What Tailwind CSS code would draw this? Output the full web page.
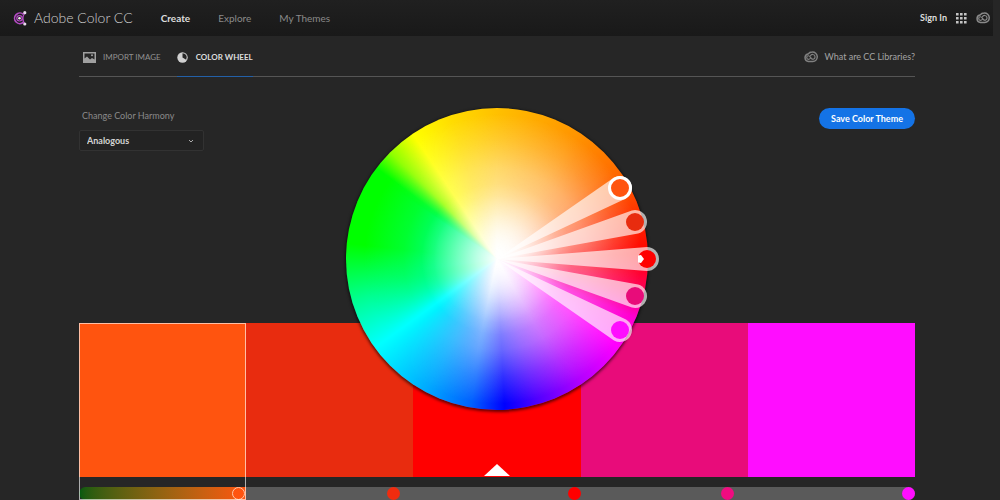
<!DOCTYPE html>
<html lang="en">
<head>
  <meta charset="UTF-8">
  <meta name="viewport" content="width=device-width, initial-scale=1.0">
  <title>Adobe Color CC</title>
  <script src="https://cdn.jsdelivr.net/npm/@tailwindcss/browser@4"></script>
</head>
<body class="h-screen overflow-hidden bg-[#262626] font-['Lato','Open_Sans',sans-serif] text-[10px] text-[#8a8a8a]">
  <svg class="hidden">
    <symbol id="cc" viewBox="0 0 28 24">
      <g fill="none" stroke="currentColor" stroke-linecap="round">
        <path d="M9 21a7.500 7.500 0 0 1-1-14.800C10 3.500 13 2 16.500 2a9.500 9.500 0 0 1 1 19z" stroke-width="3"/>
        <path d="M18 16.500c-5 0-5-7-9-7a3.600 3.600 0 0 0 0 7.200c1.500 0 2.500-.7 3.300-1.700" stroke-width="2.400"/>
        <path d="M13 9.500c1-2 3-3 5-2.500a4.800 4.800 0 0 1 0 9.500" stroke-width="2.400"/>
      </g>
    </symbol>
  </svg>

  <!-- Header -->
  <header class="mr-[7px] flex h-9 items-center bg-linear-to-b from-[#202020] to-[#191919] pl-3">
    <a href="#" class="flex items-center gap-[6px] text-sm font-light text-[#d0d0d0]">
      <svg class="size-4" viewBox="0 0 16 16">
        <path d="M11.500 4.400A5.300 5.300 0 1 0 11.500 12.200" fill="none" stroke="#b44cc4" stroke-width="1.700"/>
        <path d="M12.500 3.500c-2 3-2 7 0 10" fill="none" stroke="#b44cc4" stroke-width="1.300"/>
        <circle cx="7.500" cy="8.300" r="2.700" fill="none" stroke="#b44cc4" stroke-width="1.200"/>
        <circle cx="7.500" cy="8.300" r="1.300" fill="#eee"/>
        <circle cx="12.800" cy="2.700" r="1.600" fill="#e8d8ec"/>
        <circle cx="12.800" cy="14" r="1.600" fill="#e8d8ec"/>
      </svg>
      Adobe Color CC
    </a>
    <nav class="ml-[28px] flex gap-[28px]">
      <a href="#" class="font-bold text-[#dcdcdc]">Create</a>
      <a href="#">Explore</a>
      <a href="#">My Themes</a>
    </nav>
    <div class="ml-auto flex items-center gap-2 pr-[2px]">
      <a href="#" class="text-[9px] font-bold text-[#dcdcdc]">Sign In</a>
      <button aria-label="Apps">
        <svg class="size-3" viewBox="0 0 12 12" fill="#c4c4c4">
          <path d="M1 1h2.600v2.600H1zM5 1h2.600v2.600H5zM9 1h2.600v2.600H9zM1 5h2.600v2.600H1zM5 5h2.600v2.600H5zM9 5h2.600v2.600H9zM1 9h2.600v2.600H1zM5 9h2.600v2.600H5zM9 9h2.600v2.600H9z"/>
        </svg>
      </button>
      <a href="#" aria-label="Creative Cloud"><svg class="h-3 w-4"><use href="#cc"/></svg></a>
    </div>
  </header>

  <main class="relative mr-[85px] ml-[79px]">
    <!-- Tabs -->
    <div class="flex h-[41px] items-stretch border-b border-[#555]">
      <a href="#" class="flex items-center gap-[7px] pt-[2px] pl-1 text-[8px] text-[#909090]">
        <svg class="h-[11px] w-[13px]" viewBox="0 0 13 11">
          <path d="M0 0h13v11H0zM1.500 1.500v5l2.500-2 3 3 2-1.500 2.500 1.500v-6z" fill="#a0a0a0" fill-rule="evenodd"/>
          <circle cx="9" cy="3.300" r="1" fill="#a0a0a0"/>
        </svg>
        IMPORT IMAGE
      </a>
      <a href="#" class="-mb-px ml-4 flex items-center gap-2 border-b border-[#2360a8] pt-[2px] text-[8px] font-bold text-[#dcdcdc]">
        <svg class="size-[11px]" viewBox="0 0 11 11">
          <circle cx="5.500" cy="5.500" r="5.200" fill="#d0d0d0"/>
          <path d="M5.500 5.500V1.200a4.300 4.300 0 0 1 3.700 6.500z" fill="#262626"/>
        </svg>
        COLOR WHEEL
      </a>
      <a href="#" class="ml-auto flex items-center gap-[6px] pt-[2px] text-[9px] text-[#a4a4a4]">
        <svg class="h-3 w-[14px] text-[#808080]"><use href="#cc"/></svg>
        What are CC Libraries?
      </a>
    </div>

    <!-- Controls -->
    <div class="flex h-[246px] items-start justify-between pt-[31px]">
      <div>
        <label for="harmony" class="ml-[3px] block text-[9px] leading-4">Change Color Harmony</label>
        <div class="relative mt-[6px]">
          <select id="harmony" class="h-[21px] w-[125px] appearance-none rounded-xs border border-[#323232] bg-[#232323] pl-[7px] text-[9px] font-bold text-[#d4d4d4]">
            <option>Analogous</option>
            <option>Monochromatic</option>
            <option>Triad</option>
            <option>Complementary</option>
            <option>Compound</option>
            <option>Shades</option>
            <option>Custom</option>
          </select>
          <svg class="pointer-events-none absolute top-2 right-[10px] size-[6px]" viewBox="0 0 6 6"><path d="M1 2l2 2 2-2" fill="none" stroke="#aaa"/></svg>
        </div>
      </div>
      <button class="h-[21px] w-24 rounded-full bg-[#1473e6] text-[9px] font-bold text-white">Save Color Theme</button>
    </div>

    <!-- Color wheel: hue, spring green tint, then two white falloffs -->
    <div class="absolute top-[72px] left-1/2 size-[302px] -translate-x-1/2">
      <div class="absolute inset-0 rounded-full bg-[conic-gradient(#ffc000_0deg,#ff9500_32deg,#ff7000_52deg,#ff4800_65deg,#ff0000_88deg,#ff0060_103deg,#ff00d0_113deg,#ff00ff_126deg,#b000ff_146deg,#5000ff_164deg,#0000ff_177deg,#0060ff_190deg,#00a8ff_208deg,#00ffff_234deg,#00ff90_254deg,#00ff00_276deg,#00ff00_307deg,#90ff00_315deg,#ffff00_326deg,#ffdc00_342deg,#ffc000_360deg)] shadow-[0_1px_3px_1px_#0009]"></div>
      <div class="absolute inset-0 rounded-full bg-[radial-gradient(closest-side,#00ffb0_0%,#00ff90d0_40%,#00ff6080_62%,#00ff0000_88%)] mask-[conic-gradient(#0000_0deg,#0000_236deg,#000_262deg,#000_304deg,#0000_316deg)]"></div>
      <div class="absolute inset-0 rounded-full bg-[radial-gradient(closest-side,#fff_0%,#ffffffb8_14%,#ffffff50_32%,#ffffff18_42%,#fff0_50%)]"></div>
      <div class="absolute inset-0 rounded-full bg-[radial-gradient(closest-side,#fff_0%,#ffffffa8_30%,#ffffff68_60%,#ffffff30_78%,#fff0_96%)] mask-[conic-gradient(#000_0deg,#000_80deg,#0009_110deg,#000_150deg,#000_192deg,#0000_230deg,#0000_305deg,#000a_326deg,#000_360deg)]"></div>
      <svg class="absolute inset-0 overflow-visible" viewBox="-151 -151 302 302">
        <g fill="#fff" fill-opacity=".65">
          <path d="M0 0L117 -81.400A12 12 0 1 1 129 -60.600Z"/>
          <path d="M0 0L134.900 -48.600A12 12 0 1 1 141.100 -25.400Z"/>
          <path d="M0 0L150 -12A12 12 0 1 1 150 12Z"/>
          <path d="M0 0L141.100 25.400A12 12 0 1 1 134.900 48.600Z"/>
          <path d="M0 0L129 60.600A12 12 0 1 1 117 81.400Z"/>
        </g>
        <circle cx="123" cy="-71" r="10.500" fill="#ff540f" stroke="#fff" stroke-width="3"/>
        <circle cx="138" cy="-37" r="9" fill="#e82c0f"/>
        <circle cx="150" cy="0" r="9" fill="#f00"/>
        <path d="M141 -3.500l3-.5 3 4-3 4-3-.5z" fill="#fff"/>
        <circle cx="138" cy="37" r="9" fill="#e80c7a"/>
        <circle cx="123" cy="71" r="9" fill="#ff0dff"/>
      </svg>
    </div>

    <!-- Swatches and brightness sliders -->
    <div class="grid grid-cols-5">
      <div class="outline -outline-offset-1 outline-[#ffffffa0]">
        <div class="h-[154px] bg-[#ff540f]"></div>
        <input type="range" aria-label="Brightness 1" value="99" class="mt-[10px] block h-[13px] w-full appearance-none rounded-l-full bg-linear-to-r from-[#005a10] to-[#ff540f] [&::-webkit-slider-thumb]:size-[13px] [&::-webkit-slider-thumb]:appearance-none [&::-webkit-slider-thumb]:rounded-full [&::-webkit-slider-thumb]:border [&::-webkit-slider-thumb]:border-[#ffc8a8] [&::-webkit-slider-thumb]:bg-[#ff540f]">
      </div>
      <div>
        <div class="h-[154px] bg-[#e82c0f]"></div>
        <input type="range" aria-label="Brightness 2" value="91" class="mt-[10px] block h-[13px] w-full appearance-none bg-[#5a5a5a] [&::-webkit-slider-thumb]:size-[13px] [&::-webkit-slider-thumb]:appearance-none [&::-webkit-slider-thumb]:rounded-full [&::-webkit-slider-thumb]:bg-[#f02c0f]">
      </div>
      <div>
        <div class="flex h-[154px] items-end justify-center bg-[#ff0000] pb-px">
          <svg class="h-3 w-[26px]" viewBox="0 0 26 12"><path d="M13 0l13 12H0z" fill="#fff"/></svg>
        </div>
        <input type="range" aria-label="Brightness 3" value="100" class="mt-[10px] block h-[13px] w-full appearance-none bg-[#5a5a5a] [&::-webkit-slider-thumb]:size-[13px] [&::-webkit-slider-thumb]:appearance-none [&::-webkit-slider-thumb]:rounded-full [&::-webkit-slider-thumb]:bg-[#ff0000]">
      </div>
      <div>
        <div class="h-[154px] bg-[#e80c7a]"></div>
        <input type="range" aria-label="Brightness 4" value="91" class="mt-[10px] block h-[13px] w-full appearance-none bg-[#5a5a5a] [&::-webkit-slider-thumb]:size-[13px] [&::-webkit-slider-thumb]:appearance-none [&::-webkit-slider-thumb]:rounded-full [&::-webkit-slider-thumb]:bg-[#f00c80]">
      </div>
      <div>
        <div class="h-[154px] bg-[#ff0dff]"></div>
        <input type="range" aria-label="Brightness 5" value="100" class="mt-[10px] block h-[13px] w-full appearance-none rounded-r-full bg-[#5a5a5a] [&::-webkit-slider-thumb]:size-[13px] [&::-webkit-slider-thumb]:appearance-none [&::-webkit-slider-thumb]:rounded-full [&::-webkit-slider-thumb]:bg-[#ff0dff]">
      </div>
    </div>
  </main>
</body>
</html>
